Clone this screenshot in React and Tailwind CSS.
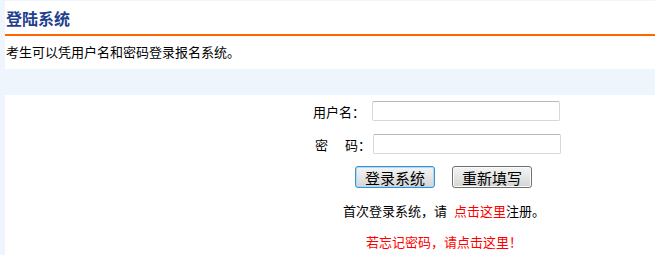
export default function App() {
  return (
    <div
      className="w-[655px] h-[255px] overflow-hidden bg-white border-l-[5px] border-t border-[#eef5fd] text-black"
      style={{ fontFamily: '"Noto Sans CJK SC", "Noto Sans", sans-serif' }}
    >
      {/* header */}
      <div className="h-[33px] flex items-center pl-px text-[16px] font-bold leading-none text-[#1f3f8f]">
        登陆系统
      </div>
      <div className="h-[2px] bg-[#ff6600]" />
      <div className="h-[30px] flex items-center pl-px text-[13px] leading-none">
        考生可以凭用户名和密码登录报名系统。
      </div>
      <div className="mt-[3px] h-[26px] bg-[#eef5fd]" />

      {/* form */}
      <div className="text-[13px] leading-none">
        <div className="mt-[6px] h-[20px] flex items-center pl-[308px]">
          <span className="w-[59px]">用户名：</span>
          <input
            type="text"
            className="w-[188px] h-[20px] border border-[#d5d8dc] border-t-[#b5b8bd] rounded-[2px] bg-white outline-none"
          />
        </div>
        <div className="mt-[13px] h-[20px] flex items-center pl-[310px]">
          <span className="w-[58px] flex">
            <span>密</span>
            <span className="ml-[17px]">码：</span>
          </span>
          <input
            type="password"
            className="w-[188px] h-[20px] border border-[#d5d8dc] border-t-[#b5b8bd] rounded-[2px] bg-white outline-none"
          />
        </div>

        <div className="mt-[12px] h-[22px] flex gap-[17px] pl-[350px]">
          <button
            type="submit"
            className="w-[80px] h-[22px] flex items-center justify-center rounded-[3px] border border-[#3c8fd0] bg-gradient-to-b from-[#f3f3f3] via-[#e6e6e6] to-[#d4d4d4] shadow-[inset_0_0_0_1px_#a8dbf7] text-[15px] leading-none"
          >
            登录系统
          </button>
          <button
            type="button"
            className="w-[80px] h-[22px] flex items-center justify-center rounded-[3px] border border-[#707070] bg-gradient-to-b from-[#f3f3f3] via-[#e6e6e6] to-[#d4d4d4] shadow-[inset_0_0_0_1px_#fcfcfc] text-[15px] leading-none"
          >
            重新填写
          </button>
        </div>

        <div className="mt-[12px] h-[20px] flex items-center pl-[338px]">
          首次登录系统，请
          <a href="#" className="ml-[7px] text-[#ff0000]">
            点击这里
          </a>
          注册。
        </div>
        <div className="mt-[11px] h-[20px] flex items-center pl-[361px]">
          <a href="#" className="text-[#ff0000]">
            若忘记密码，请点击这里！
          </a>
        </div>
      </div>
    </div>
  );
}
